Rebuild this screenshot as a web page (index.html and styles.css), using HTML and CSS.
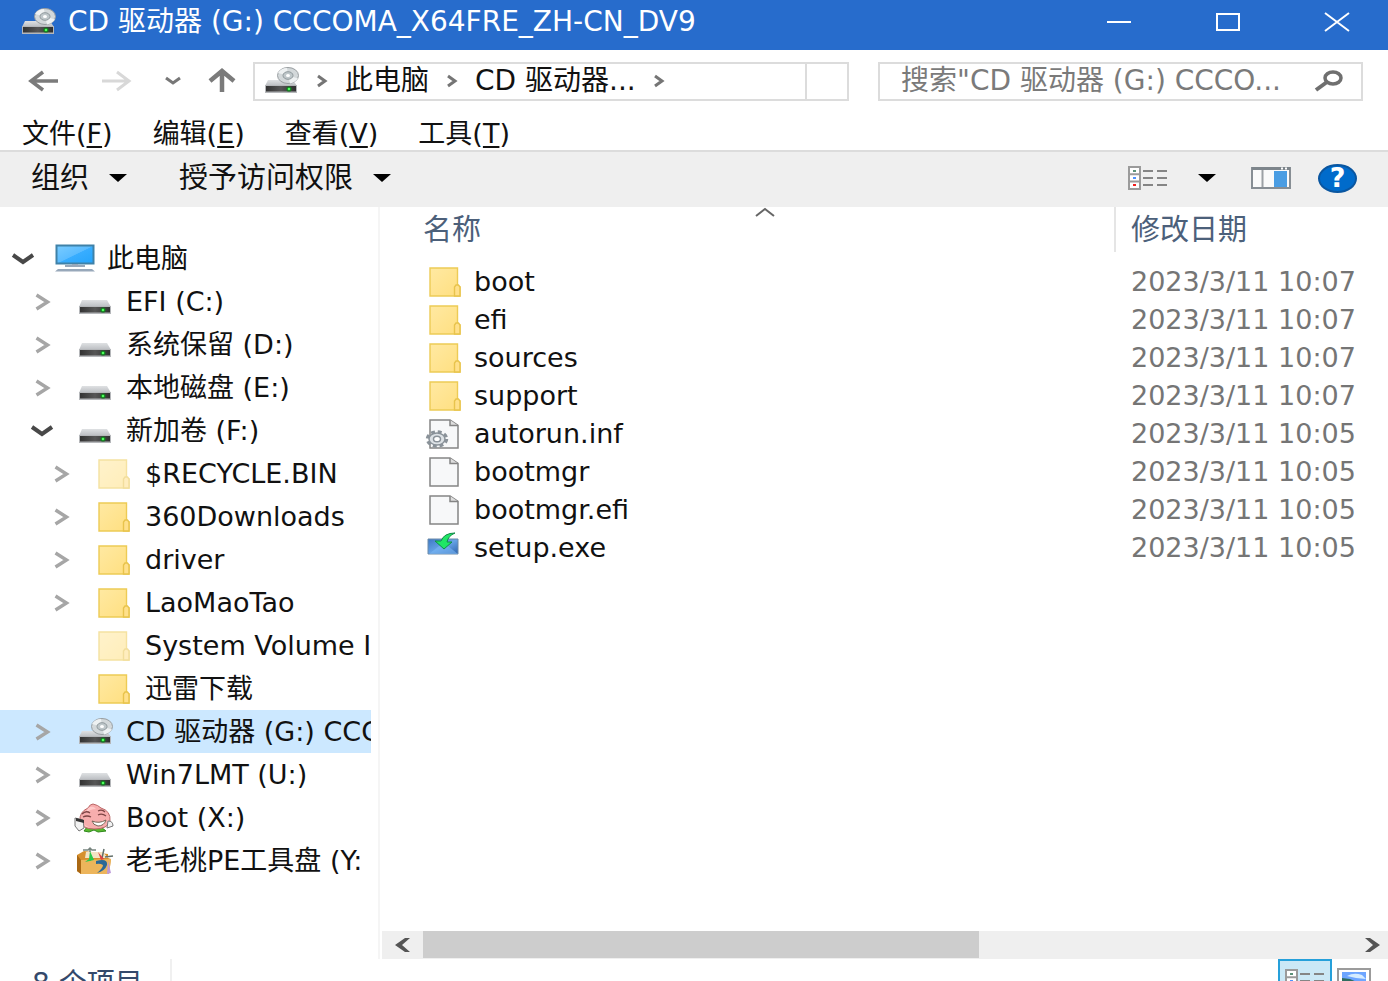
FILE: index.html
```html
<!DOCTYPE html>
<html lang="zh-CN">
<head>
<meta charset="utf-8">
<title>CD 驱动器 (G:)</title>
<link rel="stylesheet" href="styles.css">
</head>
<body>
<svg class="defs" aria-hidden="true">
  <defs>
    <linearGradient id="lid" x1="0" y1="0" x2="0" y2="1"><stop offset="0" stop-color="#dfe1e3"/><stop offset="1" stop-color="#b9bcc0"/></linearGradient>
    <linearGradient id="front" x1="0" y1="0" x2="1" y2="0"><stop offset="0" stop-color="#333"/><stop offset=".5" stop-color="#565656"/><stop offset="1" stop-color="#303030"/></linearGradient>
    <linearGradient id="paper" x1="0" y1="0" x2="1" y2="1"><stop offset="0" stop-color="#ffe9a2"/><stop offset="1" stop-color="#ffdf80"/></linearGradient>
    <linearGradient id="screen" x1="0" y1="0" x2="1" y2="1"><stop offset="0" stop-color="#7accff"/><stop offset=".5" stop-color="#5bbcff"/><stop offset=".52" stop-color="#38adff"/><stop offset="1" stop-color="#25a4fb"/></linearGradient>
    <linearGradient id="box" x1="0" y1="0" x2="1" y2="1"><stop offset="0" stop-color="#3d78c4"/><stop offset=".5" stop-color="#66a3e6"/><stop offset="1" stop-color="#2e64ae"/></linearGradient>
    <symbol id="drive" viewBox="0 0 36 30">
      <path d="M5 13h25l4 7H2z" fill="url(#lid)"/>
      <path d="M2 19h32v8H2z" fill="#b5b7ba"/><path d="M3 20h30v5.500H3z" fill="url(#front)"/>
      <circle cx="26" cy="23" r="2.600" fill="#147a20"/><circle cx="26" cy="23" r="1.300" fill="#4dff5b"/>
    </symbol>
    <symbol id="cd" viewBox="0 0 36 30">
      <path d="M5 14h25l4 6H2z" fill="url(#lid)"/>
      <ellipse cx="25" cy="9.500" rx="10.500" ry="8" fill="#d3d8da" stroke="#989da0"/>
      <path d="M25 9.500L15 7q3-5 9-5zM25 9.500l10 3q-3 4-8 5z" fill="#eef1f2"/>
      <ellipse cx="25" cy="9.500" rx="5" ry="3.800" fill="#bfc7ca" stroke="#90999d"/><ellipse cx="25" cy="9.500" rx="2" ry="1.500" fill="#fff"/>
      <path d="M2 19h32v8H2z" fill="#b5b7ba"/><path d="M3 20h30v5.500H3z" fill="url(#front)"/>
      <circle cx="26" cy="23" r="2.600" fill="#147a20"/><circle cx="26" cy="23" r="1.300" fill="#4dff5b"/>
    </symbol>
    <symbol id="folder" viewBox="0 0 32 30">
      <path d="M1 1h27.500v19H31v9H1z" fill="url(#paper)" stroke="#edcb55" stroke-width="1.400"/>
      <path d="M25.500 29v-9l1.500-2h2.500l1.500 2v9z" fill="#ffe08a" stroke="#e8c34c" stroke-width="1.400"/>
    </symbol>
    <symbol id="file" viewBox="0 0 32 30">
      <path d="M1 1h20l8 5.500V29H1z" fill="#f7f8f9" stroke="#858585" stroke-width="1.500"/>
      <path d="M21 1v5.500h8" fill="#dedede" stroke="#858585" stroke-width="1.500"/>
    </symbol>
    <symbol id="computer" viewBox="0 0 40 30">
      <path d="M1.500 1.500h37v18h-37z" fill="url(#screen)" stroke="#3f81a8" stroke-width="2"/>
      <path d="M17 20h6v1h7v2H10v-2h7zM3 25h34l3 2.500H0z" fill="#98a8ba"/>
    </symbol>
    <symbol id="right" viewBox="0 0 24 24"><path d="M6.500 5l11 7-11 7" fill="none" stroke="#a6a6a6" stroke-width="3.400"/></symbol>
    <symbol id="down" viewBox="0 0 24 24"><path d="M2 8l10 7 10-7" fill="none" stroke="#484848" stroke-width="4"/></symbol>
    <symbol id="crumb" viewBox="0 0 12 14"><path d="M2 2l7 5-7 5" fill="none" stroke="#757575" stroke-width="3"/></symbol>
    <symbol id="caret" viewBox="0 0 18 8"><path d="M0 0h18L9 8z" fill="#000"/></symbol>
    <symbol id="details" viewBox="0 0 40 26">
      <path d="M1 2h11v22H1zM1 9.300h11M1 16.600h11" fill="#fff" stroke="#9b9b9b" stroke-width="2"/>
      <path d="M5 5h3v2H5z" fill="#5b927a"/><path d="M5 12h3v2H5z" fill="#4d93ff"/><path d="M5 19h3v2H5z" fill="#f21d1d"/>
      <path d="M15 6h10M29 6h10M15 13h10M29 13h10M15 20h10M29 20h10" stroke="#858585" stroke-width="2"/>
    </symbol>
  </defs>
</svg>

<div class="window">
  <header class="titlebar">
    <svg class="ico-drive"><use href="#cd"/></svg>
    <h1 class="title">CD 驱动器 (G:) CCCOMA_X64FRE_ZH-CN_DV9</h1>
    <div class="controls">
      <button class="control" aria-label="最小化"><svg width="26" height="20"><path d="M1 10h24" stroke="#fff" stroke-width="2"/></svg></button>
      <button class="control" aria-label="最大化"><svg width="26" height="20"><path d="M2 2h22v16H2z" fill="none" stroke="#fff" stroke-width="2"/></svg></button>
      <button class="control" aria-label="关闭"><svg width="26" height="20"><path d="M1 1l24 18M25 1L1 19" stroke="#fff" stroke-width="2"/></svg></button>
    </div>
  </header>

  <div class="navbar">
    <div class="history">
      <button aria-label="后退"><svg width="30" height="22"><path d="M29 11H3M14 2L2 11l12 9" fill="none" stroke="#7b7b7b" stroke-width="3.500"/></svg></button>
      <button aria-label="前进"><svg width="30" height="22"><path d="M1 11h26M16 2l12 9-12 9" fill="none" stroke="#d8d8d8" stroke-width="3"/></svg></button>
      <button class="recent" aria-label="最近"><svg width="16" height="8"><path d="M1 1l7 5 7-5" fill="none" stroke="#777" stroke-width="3"/></svg></button>
      <button aria-label="向上"><svg width="28" height="24"><path d="M14 23V3M2 12L14 2l12 10" fill="none" stroke="#7b7b7b" stroke-width="4.500"/></svg></button>
    </div>
    <nav class="address" aria-label="地址">
      <svg class="ico-drive"><use href="#cd"/></svg>
      <svg class="ico-crumb"><use href="#crumb"/></svg>
      <button>此电脑</button>
      <svg class="ico-crumb"><use href="#crumb"/></svg>
      <button>CD 驱动器...</button>
      <svg class="ico-crumb"><use href="#crumb"/></svg>
      <button class="refresh" aria-label="刷新"></button>
    </nav>
    <form class="search">
      <input type="text" aria-label="搜索" placeholder='搜索"CD 驱动器 (G:) CCCO...'>
      <button type="button" aria-label="搜索"><svg width="28" height="22"><ellipse cx="18" cy="8" rx="8" ry="6" fill="none" stroke="#6f6f6f" stroke-width="3.500"/><path d="M12 12L1 20" stroke="#6f6f6f" stroke-width="4"/></svg></button>
    </form>
  </div>

  <nav class="menubar">
    <button>文件(<u>F</u>)</button>
    <button>编辑(<u>E</u>)</button>
    <button>查看(<u>V</u>)</button>
    <button>工具(<u>T</u>)</button>
  </nav>

  <div class="toolbar">
    <button>组织<svg class="ico-caret"><use href="#caret"/></svg></button>
    <button>授予访问权限<svg class="ico-caret"><use href="#caret"/></svg></button>
    <div class="tools">
      <button aria-label="更改视图"><svg class="ico-details"><use href="#details"/></svg><svg class="ico-caret"><use href="#caret"/></svg></button>
      <button aria-label="预览窗格"><svg width="40" height="24"><path d="M1 2h38v20H1z" fill="#fafafa" stroke="#878e94" stroke-width="2"/><path d="M1 1h38v3H1z" fill="#7d858b"/><path d="M23 5h13v16H23z" fill="#4a9de3"/><path d="M11.500 4v17" stroke="#9ca1a5" stroke-width="2"/><path d="M30 2.500h2M34 2.500h2" stroke="#fff" stroke-width="2"/></svg></button>
      <button class="help" aria-label="帮助">?</button>
    </div>
  </div>

  <main class="content">
    <nav class="sidebar" aria-label="导航窗格">
      <ul class="tree">
        <li class="node"><button class="twist" aria-label="折叠"><svg><use href="#down"/></svg></button><svg class="icon ico-pc"><use href="#computer"/></svg><a href="#">此电脑</a></li>
        <li class="node l1"><button class="twist" aria-label="展开"><svg><use href="#right"/></svg></button><svg class="icon ico-drive"><use href="#drive"/></svg><a href="#">EFI (C:)</a></li>
        <li class="node l1"><button class="twist" aria-label="展开"><svg><use href="#right"/></svg></button><svg class="icon ico-drive"><use href="#drive"/></svg><a href="#">系统保留 (D:)</a></li>
        <li class="node l1"><button class="twist" aria-label="展开"><svg><use href="#right"/></svg></button><svg class="icon ico-drive"><use href="#drive"/></svg><a href="#">本地磁盘 (E:)</a></li>
        <li class="node l1"><button class="twist" aria-label="折叠"><svg><use href="#down"/></svg></button><svg class="icon ico-drive"><use href="#drive"/></svg><a href="#">新加卷 (F:)</a></li>
        <li class="node l2"><button class="twist" aria-label="展开"><svg><use href="#right"/></svg></button><svg class="icon ico-file faded"><use href="#folder"/></svg><a href="#">$RECYCLE.BIN</a></li>
        <li class="node l2"><button class="twist" aria-label="展开"><svg><use href="#right"/></svg></button><svg class="icon ico-file"><use href="#folder"/></svg><a href="#">360Downloads</a></li>
        <li class="node l2"><button class="twist" aria-label="展开"><svg><use href="#right"/></svg></button><svg class="icon ico-file"><use href="#folder"/></svg><a href="#">driver</a></li>
        <li class="node l2"><button class="twist" aria-label="展开"><svg><use href="#right"/></svg></button><svg class="icon ico-file"><use href="#folder"/></svg><a href="#">LaoMaoTao</a></li>
        <li class="node l2"><span class="twist"></span><svg class="icon ico-file faded"><use href="#folder"/></svg><a href="#">System Volume I</a></li>
        <li class="node l2"><span class="twist"></span><svg class="icon ico-file"><use href="#folder"/></svg><a href="#">迅雷下载</a></li>
        <li class="node l1 selected"><button class="twist" aria-label="展开"><svg><use href="#right"/></svg></button><svg class="icon ico-drive"><use href="#cd"/></svg><a href="#">CD 驱动器 (G:) CCC</a></li>
        <li class="node l1"><button class="twist" aria-label="展开"><svg><use href="#right"/></svg></button><svg class="icon ico-drive"><use href="#drive"/></svg><a href="#">Win7LMT (U:)</a></li>
        <li class="node l1"><button class="twist" aria-label="展开"><svg><use href="#right"/></svg></button>
          <svg class="icon ico-pc" viewBox="0 0 40 30">
            <path d="M10 28l3-4 7 2 7-2 5 4-8 1-4-2-5 2z" fill="#58b92f" stroke="#2f8a1b"/>
            <path d="M6 18Q5 9 14 5q2-4 5-4 5 1 8 4 10 3 9 13-2 8-16 8Q8 26 6 18z" fill="#f7adad" stroke="#b66"/>
            <path d="M14 5q5-3 8 1-6 0-10 4zM9 20q4 5 12 5l-9-1z" fill="#ffcaca"/>
            <path d="M8 11q4-4 8-1M9 14q4-2 8 0M24 8q4-2 7 1M24 12q4-2 8 1" fill="none" stroke="#7d4444" stroke-width="1.300"/>
            <path d="M18 18q7 3 14-1-2 6-8 6-5-1-6-5z" fill="#fff" stroke="#765"/>
            <path d="M1 15l8 2 1 8-5 3-4-5zM34 18q5 0 5 5l-6 2z" fill="#f2f2f2" stroke="#777"/><path d="M2 15l8 2v3l-8-2z" fill="#333"/>
          </svg><a href="#">Boot (X:)</a></li>
        <li class="node l1"><button class="twist" aria-label="展开"><svg><use href="#right"/></svg></button>
          <svg class="icon ico-pc" viewBox="0 0 40 30">
            <path d="M3 9l7-4 24 3v4l3 1-2 15H7l-4-3z" fill="#d6902d"/>
            <path d="M7 14l30-1-2 15H7z" fill="#edb55b"/><path d="M3 9l4 5v14l-4-3z" fill="#aa6814"/>
            <path d="M9 4h5l2-2 2 2h4M16 2v13" fill="none" stroke="#77847f" stroke-width="1.500"/>
            <path d="M12 6h17l5 6H11z" fill="#f4e3c4"/><path d="M28 12l2-9M31 11l8-1" fill="none" stroke="#63706b" stroke-width="1.500"/>
            <path d="M16 5l4 9-9 2 4-3z" fill="#28c94b"/><path d="M24 6l6 7-3 1z" fill="#df4242"/>
            <path d="M22 15q12-3 11 4-2 6-10 8 6-5 6-8-3-2-7-1z" fill="#2c6996"/>
            <path d="M34 15l3 12-4 1z" fill="#bc9ad9"/>
          </svg><a href="#">老毛桃PE工具盘 (Y:</a></li>
      </ul>
    </nav>

    <section class="pane">
      <table class="files">
        <colgroup><col><col class="col-date"></colgroup>
        <thead><tr>
          <th scope="col">名称<svg class="sort" viewBox="0 0 20 10"><path d="M1 9l9-7 9 7" fill="none" stroke="#666" stroke-width="2"/></svg></th>
          <th scope="col">修改日期</th>
        </tr></thead>
        <tbody>
          <tr><td><a href="#" class="entry"><svg class="ico-file"><use href="#folder"/></svg>boot</a></td><td>2023/3/11 10:07</td></tr>
          <tr><td><a href="#" class="entry"><svg class="ico-file"><use href="#folder"/></svg>efi</a></td><td>2023/3/11 10:07</td></tr>
          <tr><td><a href="#" class="entry"><svg class="ico-file"><use href="#folder"/></svg>sources</a></td><td>2023/3/11 10:07</td></tr>
          <tr><td><a href="#" class="entry"><svg class="ico-file"><use href="#folder"/></svg>support</a></td><td>2023/3/11 10:07</td></tr>
          <tr><td><a href="#" class="entry"><svg class="ico-file" viewBox="0 0 32 30"><use href="#file" width="32" height="30"/><ellipse cx="8" cy="20" rx="9.500" ry="7" fill="none" stroke="#8a9299" stroke-width="3.500" stroke-dasharray="3.800 2.800"/><ellipse cx="8" cy="20" rx="8" ry="6" fill="#dce1e5" stroke="#8a9299" stroke-width="1.500"/><ellipse cx="8" cy="20" rx="3.500" ry="2.800" fill="#fff" stroke="#8a9299" stroke-width="1.500"/></svg>autorun.inf</a></td><td>2023/3/11 10:05</td></tr>
          <tr><td><a href="#" class="entry"><svg class="ico-file"><use href="#file"/></svg>bootmgr</a></td><td>2023/3/11 10:05</td></tr>
          <tr><td><a href="#" class="entry"><svg class="ico-file"><use href="#file"/></svg>bootmgr.efi</a></td><td>2023/3/11 10:05</td></tr>
          <tr><td><a href="#" class="entry"><svg class="ico-file" viewBox="0 0 32 30"><path d="M-1 6h30v15H-1z" fill="url(#box)" stroke="#6d8ba8"/><path d="M0 21l10-8h9l10 8z" fill="#78b5f3" opacity=".6"/><path d="M26 0Q15 0 12 8H6l9 8 8-7h-5q1-6 8-9z" fill="#1fe665" stroke="#128c48"/></svg>setup.exe</a></td><td>2023/3/11 10:05</td></tr>
        </tbody>
      </table>
      <div class="scrollbar">
        <button aria-label="向左滚动"><svg width="18" height="14"><path d="M16 0h-5L1 7l10 7h5L8 7z" fill="#555"/></svg></button>
        <div class="track"><div class="thumb"></div></div>
        <button class="end" aria-label="向右滚动"><svg width="18" height="14"><path d="M2 0h5l10 7-10 7H2l8-7z" fill="#555"/></svg></button>
      </div>
    </section>
  </main>

  <footer class="status">
    <div class="status-row">
      <span class="count">8 个项目</span>
      <div class="views">
        <button class="active" aria-label="详细信息"><svg class="ico-details"><use href="#details"/></svg></button>
        <button aria-label="大图标"><svg width="34" height="26"><path d="M1 1h32v24H1z" fill="#fff" stroke="#9b9b9b" stroke-width="2"/><path d="M5 4h24v18H5z" fill="#6da5ff"/><path d="M10 8q7-4 15-1l4 4-10-1z" fill="#d5ecff"/><path d="M5 10l8 1 16 7v4H5z" fill="#2f6d60"/></svg></button>
      </div>
    </div>
  </footer>
</div>
</body>
</html>
```
FILE: styles.css
```css
* { box-sizing: border-box; }

body {
  margin: 0;
  background: #fff;
  color: #111;
  font: 27px/36px "DejaVu Sans", "Noto Sans CJK SC", sans-serif;
}

button {
  display: flex;
  align-items: center;
  margin: 0;
  padding: 0;
  border: 0;
  background: none;
  color: inherit;
  font: inherit;
  white-space: nowrap;
}

a { color: inherit; text-decoration: none; }
svg { display: block; flex: none; overflow: visible; }
u { text-decoration-thickness: 2px; text-underline-offset: 3px; }

.defs { position: absolute; width: 0; height: 0; }
.ico-drive { width: 36px; height: 30px; }
.ico-pc { width: 40px; height: 30px; }
.ico-file { width: 32px; height: 30px; }
.ico-crumb { width: 12px; height: 14px; }
.ico-caret { width: 18px; height: 8px; }
.ico-details { width: 40px; height: 26px; }

.window {
  display: flex;
  flex-direction: column;
  height: 100vh;
  overflow: hidden;
}

/* Title bar */
.titlebar {
  display: flex;
  flex: none;
  align-items: center;
  gap: 12px;
  height: 50px;
  padding: 0 0 6px 20px;
  background: #276ccc;
  color: #fff;
}
.title { flex: 1; margin: 0; font-size: 28px; font-weight: 400; white-space: nowrap; }
.controls { display: flex; gap: 7px; }
.control { justify-content: center; width: 102px; height: 44px; }

/* Address row */
.navbar {
  display: flex;
  flex: none;
  align-items: center;
  height: 62px;
  padding: 0 25px 0 29px;
}
.history { display: flex; flex: none; align-items: center; width: 224px; }
.history button { margin-right: 42px; }
.history button:nth-child(2) { margin-right: 34px; }
.history .recent { margin-right: 27px; }
.history button:last-child { margin-right: 0; }
.address {
  display: flex;
  flex: 597 0 0;
  align-items: center;
  gap: 17px;
  min-width: 0;
  height: 39px;
  border: 2px solid #dcdcdc;
  font-size: 28px;
}
.address .ico-drive { margin-left: 8px; }
.address .refresh { width: 42px; height: 100%; margin-left: auto; border-left: 2px solid #dcdcdc; }
.search {
  display: flex;
  flex: 485 0 0;
  align-items: center;
  min-width: 0;
  height: 39px;
  margin-left: 29px;
  border: 2px solid #dcdcdc;
}
.search input {
  flex: 1;
  min-width: 0;
  margin: 0 8px 0 21px;
  padding: 0;
  border: 0;
  background: none;
  font: inherit;
  font-size: 28px;
}
.search button { margin-right: 18px; }
.search input::placeholder { color: #7a7a7a; opacity: 1; }

/* Menus */
.menubar {
  display: flex;
  flex: none;
  align-items: flex-end;
  gap: 40px;
  height: 38px;
  padding-left: 22px;
  line-height: 32px;
}
.toolbar {
  display: flex;
  flex: none;
  align-items: center;
  gap: 52px;
  height: 57px;
  padding: 0 31px 3px;
  border-top: 2px solid #dcdcdc;
  background: #efefef;
  font-size: 29px;
}
.toolbar button { gap: 20px; }
.tools { display: flex; align-items: center; gap: 35px; margin-left: auto; }
.tools button:first-child { gap: 30px; }
.toolbar .help {
  justify-content: center;
  width: 39px;
  height: 29px;
  border: 2px solid #0a56a0;
  border-radius: 50%;
  background: #006bcb;
  color: #fff;
  font-weight: 700;
  font-size: 27px;
}
.tools button:nth-child(2) { margin-right: -8px; }

/* Main area */
.content { display: flex; flex: 1; min-height: 0; }
.sidebar { flex: none; width: 380px; padding: 30px 7px 0 0; border-right: 2px solid #f5f5f5; }
.tree { margin: 0; padding: 0; list-style: none; }
.node {
  display: flex;
  align-items: center;
  height: 43px;
  padding-left: 11px;
  overflow: hidden;
  white-space: nowrap;
}
.node.l1 { padding-left: 30px; }
.node.l2 { padding-left: 49px; }
.node.selected { background: #cce8ff; }
.twist { flex: none; width: 24px; height: 24px; margin-right: 20px; }
.twist svg { width: 24px; height: 24px; }
.icon { margin-right: 12px; }
.icon.ico-drive { margin-left: 3px; margin-right: 13px; }
.icon.ico-file { margin-left: 5px; margin-right: 15px; }
.faded { opacity: .55; }

.pane { display: flex; flex: 1; flex-direction: column; min-width: 0; padding-left: 2px; }
.files { width: 100%; border-collapse: collapse; table-layout: fixed; }
.col-date { width: 273px; }
.files th {
  position: relative;
  height: 45px;
  padding: 0 0 0 15px;
  border-left: 2px solid #e5e5e5;
  color: #4c607a;
  font-size: 29px;
  font-weight: 400;
  text-align: left;
}
.files th:first-child { padding-left: 41px; border-left: 0; }
.sort { position: absolute; top: 0; left: 51%; width: 20px; height: 10px; }
.files thead::after { content: ""; display: block; height: 11px; }
.files td { height: 38px; padding: 0 0 0 16px; color: #757575; white-space: nowrap; }
.files td:first-child { padding-left: 47px; color: #111; }
.entry { display: flex; align-items: center; gap: 13px; }

.scrollbar { display: flex; flex: none; height: 28px; margin-top: auto; background: #efefef; }
.scrollbar button { flex: none; justify-content: center; width: 41px; }
.scrollbar .end { width: 32px; }
.track { flex: 1; }
.thumb { width: 59.6%; height: 27px; background: #cdcdcd; }

/* Status bar */
.status { flex: none; height: 22px; overflow: hidden; }
.status-row { display: flex; justify-content: space-between; height: 40px; padding: 0 12px 0 32px; }
.count { padding: 7px 27px 0 0; border-right: 2px solid #f0f0f0; color: #34496b; font-size: 28px; }
.views { display: flex; align-items: flex-start; }
.views button { justify-content: center; height: 44px; width: 44px; }
.views .active { width: 54px; border: 2px solid #26a0da; background: #cbe8f6; }
```
